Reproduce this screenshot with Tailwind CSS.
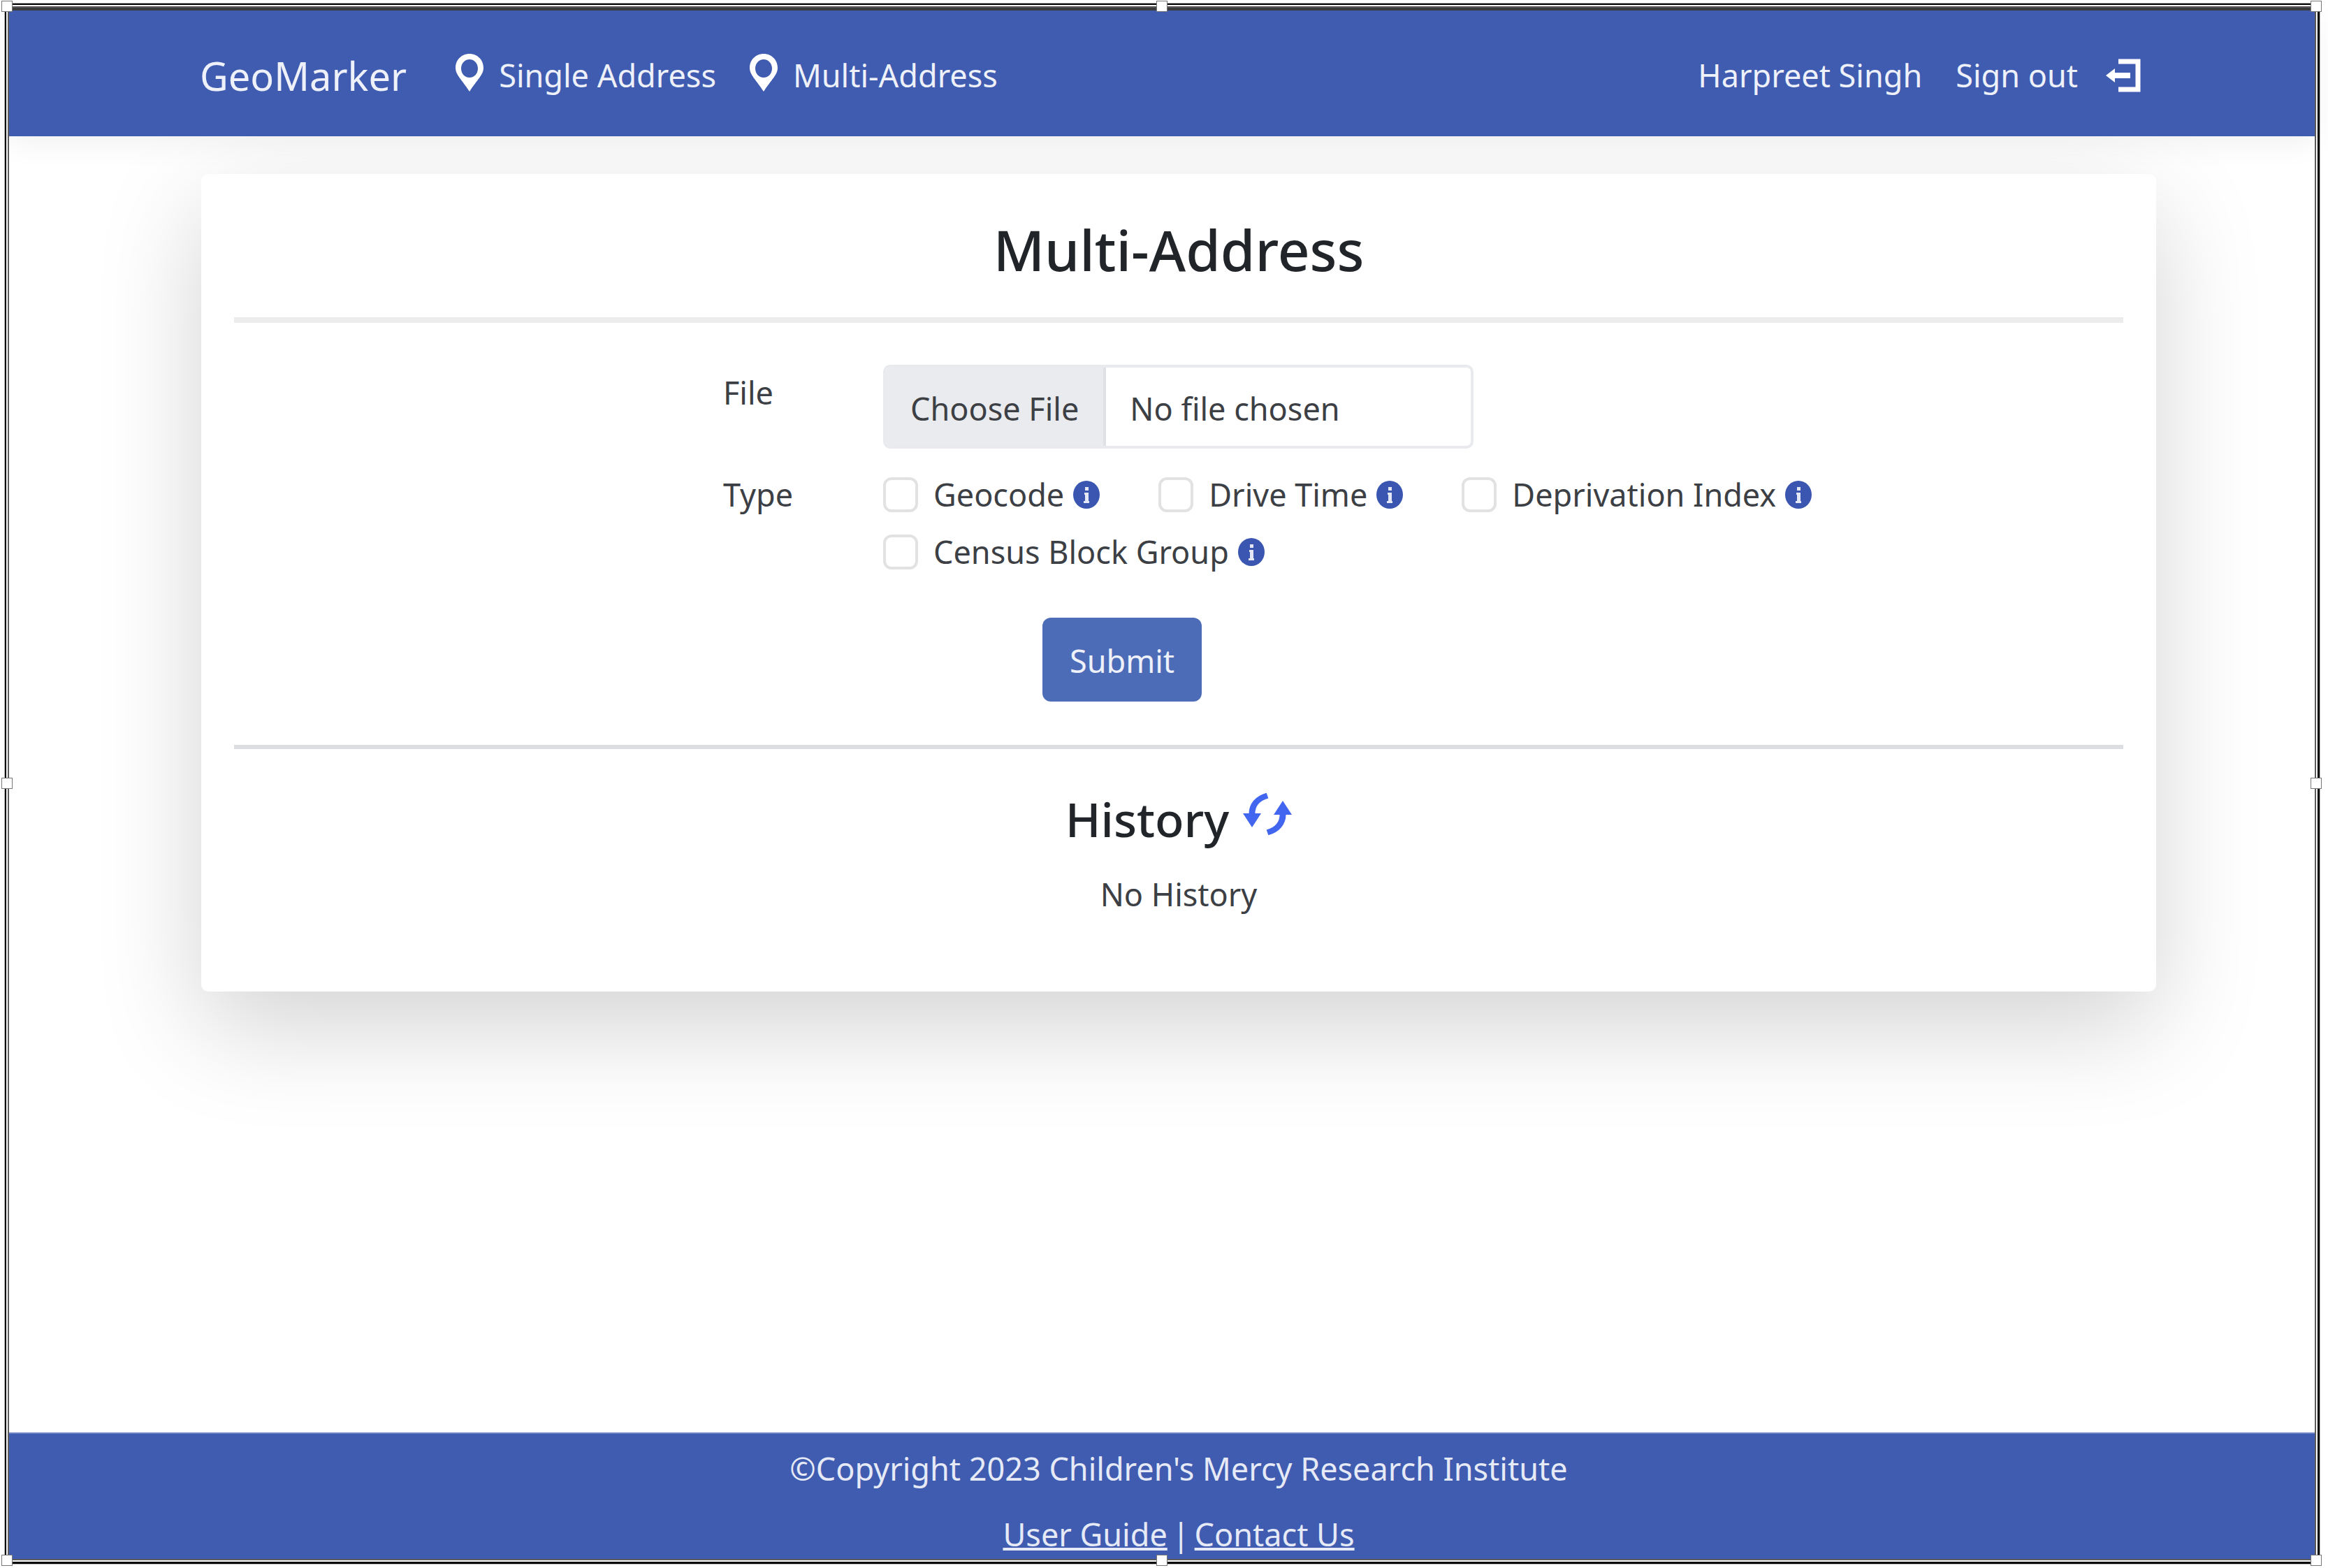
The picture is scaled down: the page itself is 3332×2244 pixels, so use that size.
<!DOCTYPE html>
<html lang="en">
<head>
<meta charset="utf-8">
<title>GeoMarker - Multi-Address</title>
<script src="https://cdn.jsdelivr.net/npm/@tailwindcss/browser@4"></script>
</head>
<body class="flex min-h-screen flex-col bg-white pt-1 pr-[11px] pb-[5px] pl-[6px] font-['Noto_Sans','Open_Sans',sans-serif] text-[45px] leading-[72px] text-[#3c4045]">
<svg class="hidden" aria-hidden="true">
  <symbol id="pin" viewBox="0 0 40 54"><path fill="currentColor" fill-rule="evenodd" d="M20 0C9 0 0 8.500 0 20c0 10 9 17 20 34 11-17 20-24 20-34C40 8.500 31 0 20 0Zm0 8c7 0 12 6 12 13s-5 13-12 13S8 28 8 21 13 8 20 8Z"/></symbol>
  <symbol id="info" viewBox="0 0 38 40"><ellipse cx="19" cy="20" rx="19" ry="20" fill="#3a56b0"/><path fill="#e4e8f6" d="M17 9h5v5h-5zM16 17h6v12h1v3h-8v-3h2v-9h-1z"/></symbol>
</svg>
<div class="relative flex flex-1 flex-col border border-[#bcbcbc]">
 <div class="flex flex-1 flex-col border-2 border-r-3 border-b-3 border-black p-0.5">
  <div class="flex flex-1 flex-col border-2 border-[#5c5c5c]">
   <header class="relative z-10 flex h-[184px] items-center border-t-4 border-[#3b3b3b] bg-[#405cb0] pt-[6px] pr-[249px] pl-[273px] text-[#eef1fa] shadow-[0_10px_40px_rgba(0,0,0,0.06)]">
    <a href="#" class="mr-[70px] text-[56px]">GeoMarker</a>
    <nav class="flex flex-1 items-center gap-[48px]">
     <a href="#" class="flex items-center gap-[22px]"><svg class="mb-[8px] h-[54px] w-[40px] shrink-0 text-white"><use href="#pin"/></svg>Single Address</a>
     <a href="#" class="flex items-center gap-[22px]"><svg class="mb-[8px] h-[54px] w-[40px] shrink-0 text-white"><use href="#pin"/></svg>Multi-Address</a>
    </nav>
    <div class="flex items-center gap-[48px]">
     <span>Harpreet Singh</span>
     <a href="#" class="flex items-center gap-[40px]">Sign out
      <svg class="h-[48px] w-[50px]" viewBox="0 0 50 48"><path fill="none" stroke="#fff" stroke-width="7" d="M18 4h28v40H18"/><path fill="#fff" d="M0 24 13 14v6h22v8H13v6z"/></svg></a>
    </div>
   </header>
   <main class="flex-1 overflow-hidden pt-[54px] pr-[227px] pl-[275px]">
    <section class="min-h-[1170px] rounded-[10px] bg-white px-[47px] pt-[60px] shadow-[0_50px_150px_rgba(0,0,0,0.175)]">
     <h1 class="text-center text-[80px] leading-[96px] font-medium text-[#212529]">Multi-Address</h1>
     <hr class="mt-[49px] border-t-8 border-[#ececec]">
     <form class="pl-[700px]">
      <div class="flex items-start pt-[60px]">
       <label for="file" class="w-[229px] pt-[4px]">File</label>
       <input id="file" type="file" class="h-[120px] w-[845px] rounded-[10px] border-4 border-[#e8eaed] text-[#3c4045] file:mr-[34px] file:h-[112px] file:border-r-4 file:border-[#dfe1e5] file:bg-[#e9ebef] file:px-[35px] file:pt-[6px] file:text-[#3c4045]">
      </div>
      <div role="group" aria-labelledby="type-label" class="flex items-start pt-[30px]">
       <span id="type-label" class="w-[229px]">Type</span>
       <div class="flex flex-1 flex-wrap gap-x-[84px] gap-y-[10px]">
        <div class="flex items-center"><input id="geo" type="checkbox" class="mr-[22px] size-[50px] appearance-none rounded-[12px] border-4 border-[#e2e2e2] bg-white"><label for="geo">Geocode</label><svg class="ml-[13px] h-[40px] w-[38px]"><use href="#info"/></svg></div>
        <div class="flex items-center"><input id="drive" type="checkbox" class="mr-[22px] size-[50px] appearance-none rounded-[12px] border-4 border-[#e2e2e2] bg-white"><label for="drive">Drive Time</label><svg class="ml-[13px] h-[40px] w-[38px]"><use href="#info"/></svg></div>
        <div class="flex items-center"><input id="dep" type="checkbox" class="mr-[22px] size-[50px] appearance-none rounded-[12px] border-4 border-[#e2e2e2] bg-white"><label for="dep">Deprivation Index</label><svg class="ml-[13px] h-[40px] w-[38px]"><use href="#info"/></svg></div>
        <div class="flex basis-full items-center"><input id="census" type="checkbox" class="mr-[22px] size-[50px] appearance-none rounded-[12px] border-4 border-[#e2e2e2] bg-white"><label for="census">Census Block Group</label><svg class="ml-[13px] h-[40px] w-[38px]"><use href="#info"/></svg></div>
       </div>
      </div>
      <button type="submit" class="mt-[58px] ml-[457px] block h-[120px] w-[228px] rounded-[12px] bg-[#4d6cb8] pt-[4px] text-[#eef1fa]">Submit</button>
     </form>
     <hr class="mt-[62px] border-t-6 border-[#dcdde0]">
     <div class="flex items-center justify-center gap-[20px] pt-[56px]">
      <h2 class="text-[68px] leading-[88px] font-medium text-[#212529]">History</h2>
      <button type="button" aria-label="Refresh history" class="mb-[14px]"><svg class="h-[60px] w-[70px]" viewBox="0 0 70 66" preserveAspectRatio="none"><g fill="none" stroke="#4366f0" stroke-width="9"><path d="M35 4C22 8 12 18 13 35"/><path d="M35 62C48 58 58 48 57 31"/></g><path fill="#4366f0" d="M0 32h26L13 54zM70 34H44L57 12z"/></svg></button>
     </div>
     <p class="pt-[28px] text-center">No History</p>
    </section>
   </main>
   <footer class="h-[181px] border-t-2 border-[#6f84c4] bg-[#405cb0] pl-[48px] pt-[14px] text-center text-[#e6eaf7]">
    <p>©Copyright 2023 Children's Mercy Research Institute</p>
    <p class="flex justify-center gap-[7px] pt-[22px]"><a href="#" class="underline decoration-4">User Guide</a><span>|</span><a href="#" class="underline decoration-4">Contact Us</a></p>
   </footer>
  </div>
 </div>
 <!-- selection handles -->
 <div class="pointer-events-none absolute -top-[4px] -right-[3px] -bottom-[3px] -left-[5px] z-20 grid grid-cols-3 grid-rows-3">
  <i class="size-[16px] self-start border border-[#777] bg-white"></i>
  <i class="size-[16px] self-start justify-self-center border border-[#777] bg-white"></i>
  <i class="size-[16px] self-start justify-self-end border border-[#777] bg-white"></i>
  <i class="size-[16px] self-center border border-[#777] bg-white"></i>
  <i></i>
  <i class="size-[16px] self-center justify-self-end border border-[#777] bg-white"></i>
  <i class="size-[16px] self-end border border-[#777] bg-white"></i>
  <i class="size-[16px] self-end justify-self-center border border-[#777] bg-white"></i>
  <i class="size-[16px] self-end justify-self-end border border-[#777] bg-white"></i>
 </div>
</div>
</body>
</html>
